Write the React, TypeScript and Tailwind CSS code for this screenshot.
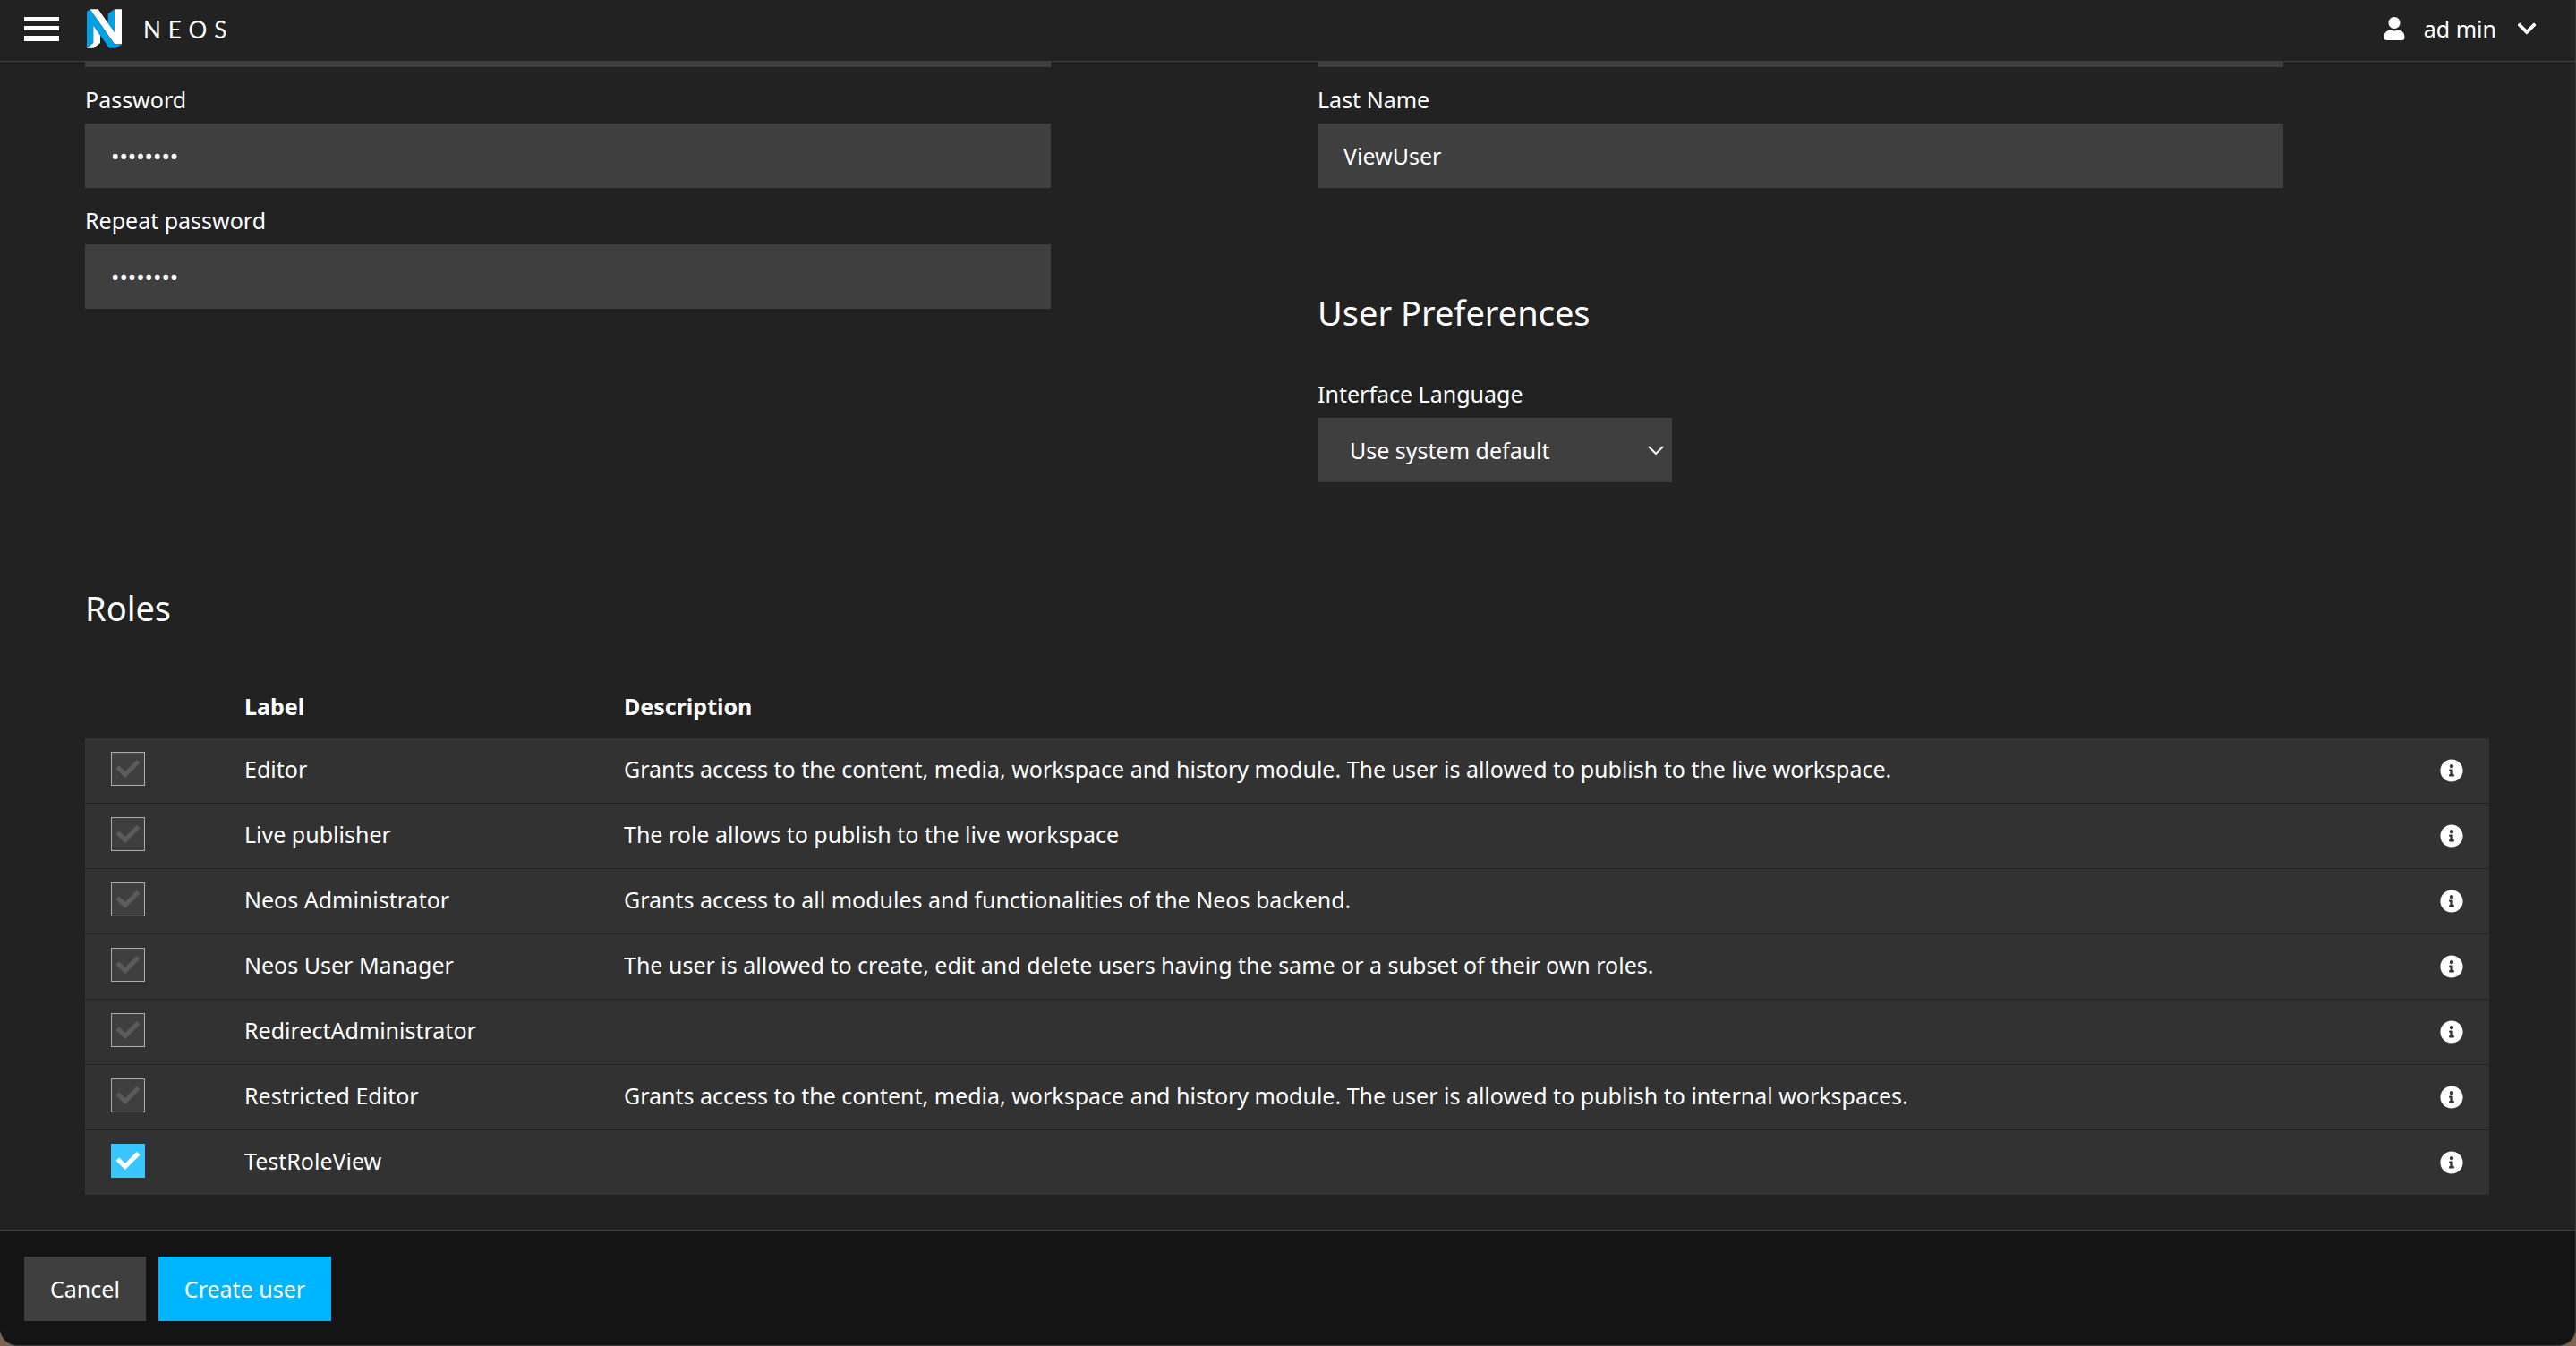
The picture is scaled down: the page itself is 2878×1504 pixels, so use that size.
import React from 'react';
import { FaCheck, FaChevronDown, FaInfoCircle, FaUser } from 'react-icons/fa';

const ROLES = [
  { id: 'editor', label: 'Editor', description: 'Grants access to the content, media, workspace and history module. The user is allowed to publish to the live workspace.' },
  { id: 'live-publisher', label: 'Live publisher', description: 'The role allows to publish to the live workspace' },
  { id: 'administrator', label: 'Neos Administrator', description: 'Grants access to all modules and functionalities of the Neos backend.' },
  { id: 'user-manager', label: 'Neos User Manager', description: 'The user is allowed to create, edit and delete users having the same or a subset of their own roles.' },
  { id: 'redirect-administrator', label: 'RedirectAdministrator', description: '' },
  { id: 'restricted-editor', label: 'Restricted Editor', description: 'Grants access to the content, media, workspace and history module. The user is allowed to publish to internal workspaces.' },
  { id: 'test-role-view', label: 'TestRoleView', description: '', checked: true },
];

const INPUT = 'block h-[72px] w-full bg-[#3f3f3f] px-[29px] text-white outline-none';

type FieldProps = {
  id: string;
  label: string;
  type?: string;
  value: string;
};

const Field: React.FC<FieldProps> = ({ id, label, type = 'text', value }) => (
  <div className="w-[82.4%] pt-[18px]">
    <label htmlFor={id} className="mb-[9px] block">{label}</label>
    <input id={id} type={type} defaultValue={value} className={INPUT} />
  </div>
);

const Logo: React.FC = () => (
  <svg viewBox="291 29 117 132" className="h-11 w-[39px]" aria-hidden="true">
    <path fill="#00a0e6" d="M291 38L302 30L384 148H408L389 160H366L313 85V143L291 159ZM362 45L384 30V108L362 77Z" />
    <path fill="#fff" d="M302 30H329L384 108V30H408V147H384ZM313 85L336 118V143L314 160H291L313 143Z" />
  </svg>
);

const Header: React.FC = () => (
  <header className="flex h-[69px] shrink-0 items-center justify-between border-b border-[#3f3f3f] pr-[42px] pb-1 pl-[27px]">
    <div className="flex items-center">
      <button type="button" aria-label="Menu">
        <svg viewBox="0 0 39 27" className="block h-[27px] w-[39px]" fill="#fff">
          <path d="M0 0h39v5H0zM0 10h39v5H0zM0 21h39v6H0z" />
        </svg>
      </button>
      <a href="#" className="ml-[31px] flex items-center gap-6">
        <Logo />
        <span className="pt-[2px] font-[Lato,sans-serif] text-[26px] tracking-[8px]">NEOS</span>
      </a>
    </div>
    <button type="button" className="flex items-center">
      <FaUser size={26} />
      <span className="ml-5">ad min</span>
      <FaChevronDown size={24} className="ml-[22px]" />
    </button>
  </header>
);

const Roles: React.FC = () => (
  <table className="w-full table-fixed border-separate border-spacing-0 text-left">
    <colgroup>
      <col className="w-[149px]" />
      <col className="w-[424px]" />
      <col />
      <col className="w-[120px]" />
    </colgroup>
    <thead>
      <tr className="h-[73px]">
        <td />
        <th className="px-[29px]">Label</th>
        <th className="px-[29px]">Description</th>
        <td />
      </tr>
    </thead>
    <tbody>
      {ROLES.map((role) => (
        <tr key={role.id} className="bg-[#323232] [&>td]:border-[#222] [&:not(:last-child)>td]:border-b">
          <td className="px-[29px] pt-[15px] pb-[19px]">
            <div className="relative h-[38px] w-[38px]">
              <input
                id={role.id}
                type="checkbox"
                defaultChecked={role.checked}
                className="peer block h-full w-full appearance-none border border-[#adadad] bg-[#3f3f3f] checked:border-[#39c6ff] checked:bg-[#39c6ff]"
              />
              <FaCheck size={26} className="pointer-events-none absolute inset-0 m-auto text-[#5b5b5b] peer-checked:text-white" />
            </div>
          </td>
          <td className="px-[29px] pt-4 pb-5 align-top">
            <label htmlFor={role.id}>{role.label}</label>
          </td>
          <td className="px-[29px] pt-4 pb-5 align-top">{role.description}</td>
          <td className="px-[29px]">
            <button type="button" aria-label={`Details for ${role.label}`} className="ml-auto block">
              <FaInfoCircle size={26} />
            </button>
          </td>
        </tr>
      ))}
    </tbody>
  </table>
);

const App: React.FC = () => {
  return (
    <div className="h-screen bg-[#7b6453]">
      <div className="flex h-full flex-col overflow-hidden rounded-b-[20px] border-r border-b border-[#3a3a3a] bg-[#222] font-['Noto_Sans',sans-serif] text-[25px] leading-[36px] text-white">
        <Header />

        {/* The form is scrolled to its end */}
        <main className="flex min-h-0 flex-1 flex-col justify-end overflow-hidden pr-24 pb-[39px] pl-[95px]">
          <div className="grid shrink-0 grid-cols-2 gap-x-[68px]">
            <div>
              <div className="w-[82.4%]">
                <input aria-label="Username" className={INPUT} />
              </div>
              <Field id="password" label="Password" type="password" value="password" />
              <Field id="repeat-password" label="Repeat password" type="password" value="password" />
            </div>

            <div>
              <div className="w-[82.4%]">
                <input aria-label="First Name" className={INPUT} />
              </div>
              <Field id="last-name" label="Last Name" value="ViewUser" />

              <h2 className="mt-[113px] mb-[29px] text-[38px] leading-[52px]">User Preferences</h2>
              <div className="w-[396px] pt-[18px]">
                <label htmlFor="language" className="mb-[9px] block">Interface Language</label>
                <div className="relative">
                  <select id="language" className="block h-[72px] w-full appearance-none bg-[#3f3f3f] px-9 text-white outline-none">
                    <option>Use system default</option>
                  </select>
                  <svg viewBox="0 0 18 10" className="pointer-events-none absolute top-[31px] right-[9px] h-[10px] w-[18px]" fill="none" stroke="#fff" strokeWidth="2">
                    <path d="M1 1L9 9L17 1" />
                  </svg>
                </div>
              </div>
            </div>
          </div>

          <section className="mt-[114px] shrink-0">
            <h2 className="mb-[47px] text-[38px] leading-[52px]">Roles</h2>
            <Roles />
          </section>
        </main>

        <footer className="flex shrink-0 gap-[14px] border-t border-[#3f3f3f] bg-[#141414] px-[27px] pt-[29px] pb-[27px]">
          <button type="button" className="h-[72px] bg-[#3f3f3f] px-[29px]">Cancel</button>
          <button type="submit" className="h-[72px] bg-[#00b5ff] px-[29px]">Create user</button>
        </footer>
      </div>
    </div>
  );
};

export default App;
